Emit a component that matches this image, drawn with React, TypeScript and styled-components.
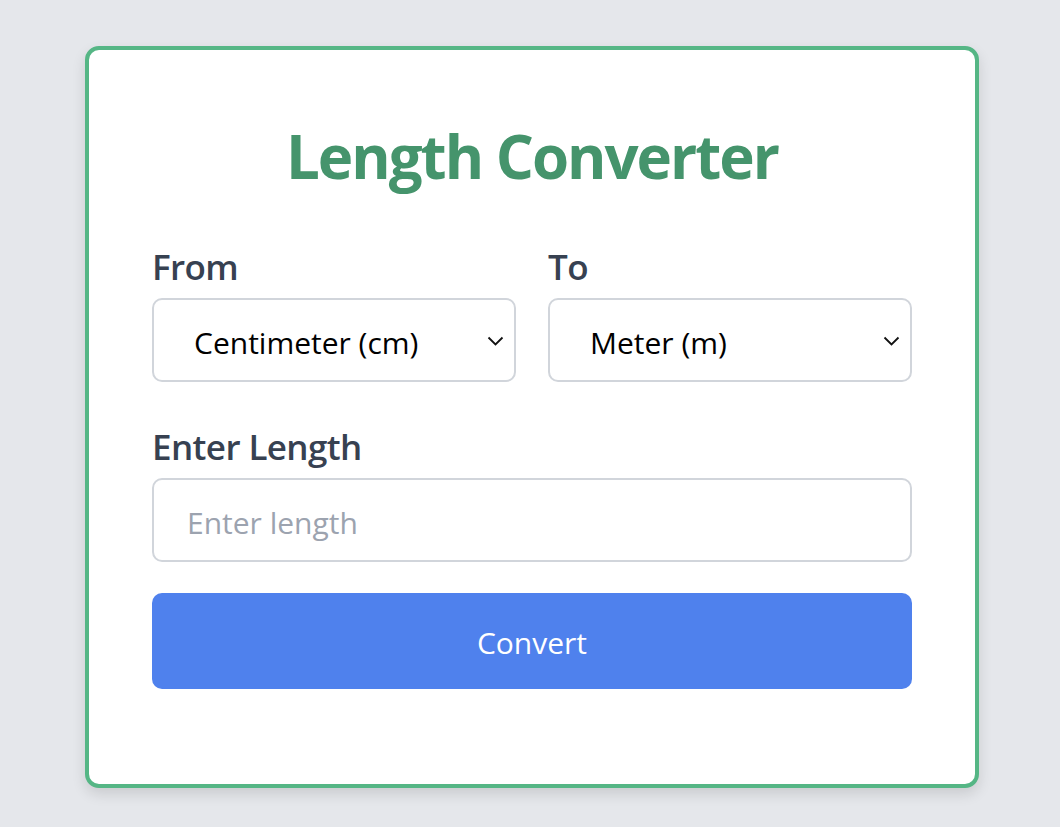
import React from 'react';

import styled, { createGlobalStyle } from 'styled-components';

const GlobalStyle = createGlobalStyle`
	html, body {
		margin: 0;
		padding: 0;
		background: #e5e7eb;
		font-family: 'Open Sans', 'Noto Sans', sans-serif;
	}
`;

const SPage = styled.div`
	min-height: 827px;
	display: flex;
	justify-content: center;
	padding: 46px 0 0 4px;
	box-sizing: border-box;
`;

const SCard = styled.div`
	width: 894px;
	height: 742px;
	box-sizing: border-box;
	background: #fff;
	border: 4px solid #55b685;
	border-radius: 14px;
	box-shadow: 0 6px 14px rgba(0, 0, 0, 0.12);
	padding: 70px 63px 0;
`;

const STitle = styled.h1`
	margin: 0 0 52px;
	text-align: center;
	font-size: 60px;
	line-height: 72px;
	font-weight: 700;
	color: #45946c;
	letter-spacing: -2px;
`;

const SRow = styled.div`
	display: grid;
	grid-template-columns: 1fr 1fr;
	gap: 32px;
	margin-bottom: 42px;
`;

const SField = styled.div`
	display: flex;
	flex-direction: column;
`;

const SLabel = styled.label`
	font-size: 35px;
	line-height: 46px;
	font-weight: 600;
	color: #374151;
	margin-bottom: 8px;
	letter-spacing: -0.6px;
`;

const SSelectWrap = styled.div`
	position: relative;
`;

const SSelect = styled.select`
	appearance: none;
	width: 100%;
	height: 84px;
	box-sizing: border-box;
	border: 2px solid #d1d5db;
	border-radius: 10px;
	background: #fff;
	padding: 4px 40px 0;
	font-family: inherit;
	font-size: 30px;
	color: #000;
`;

const SChevron = styled.svg`
	position: absolute;
	right: 12px;
	top: 38px;
	pointer-events: none;
`;

const SInput = styled.input`
	width: 100%;
	height: 84px;
	box-sizing: border-box;
	border: 2px solid #d1d5db;
	border-radius: 10px;
	padding: 4px 33px 0;
	font-family: inherit;
	font-size: 30px;
	margin-bottom: 31px;

	&::placeholder {
		color: #9ca3af;
	}
`;

const SButton = styled.button`
	width: 100%;
	height: 96px;
	border: none;
	border-radius: 10px;
	background: #4f81ed;
	color: #fff;
	font-family: inherit;
	font-size: 30px;
	padding-top: 4px;
`;

type SelectProps = {
	label: string;
	value: string;
	options: string[];
};

const UnitSelect: React.FC<SelectProps> = props => {
	return (
		<SField>
			<SLabel>{props.label}</SLabel>
			<SSelectWrap>
				<SSelect defaultValue={props.value}>
					{props.options.map(o => (
						<option key={o}>{o}</option>
					))}
				</SSelect>
				<SChevron width="17" height="10" viewBox="0 0 17 10">
					<path d="M1.5 1.5 L8.5 8.5 L15.5 1.5" fill="none" stroke="#111" strokeWidth="1.8" />
				</SChevron>
			</SSelectWrap>
		</SField>
	);
};

const units = ['Millimeter (mm)', 'Centimeter (cm)', 'Meter (m)', 'Kilometer (km)', 'Inch (in)', 'Foot (ft)'];

const App: React.FC = () => {
	return (
		<>
			<GlobalStyle />
			<SPage>
				<SCard>
					<STitle>Length Converter</STitle>
					<SRow>
						<UnitSelect label="From" value="Centimeter (cm)" options={units} />
						<UnitSelect label="To" value="Meter (m)" options={units} />
					</SRow>
					<SField>
						<SLabel>Enter Length</SLabel>
						<SInput placeholder="Enter length" />
					</SField>
					<SButton>Convert</SButton>
				</SCard>
			</SPage>
		</>
	);
};

export default App;
